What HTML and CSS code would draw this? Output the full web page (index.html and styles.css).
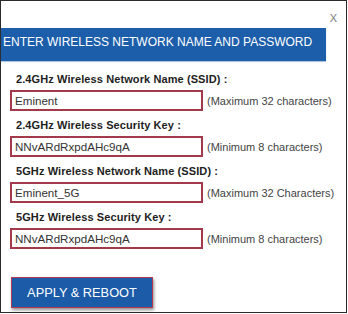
FILE: index.html
```html
<!DOCTYPE html>
<html>
<head>
<meta charset="utf-8">
<link rel="stylesheet" href="styles.css">
</head>
<body>
<div class="dialog">
  <div class="top-row"><span class="close">X</span></div>
  <div class="header">ENTER WIRELESS NETWORK NAME AND PASSWORD</div>
  <div class="form">
    <div class="group">
      <div class="label">2.4GHz Wireless Network Name (SSID) :</div>
      <div class="field-row">
        <input class="field" type="text" value="Eminent">
        <span class="hint">(Maximum 32 characters)</span>
      </div>
    </div>
    <div class="group">
      <div class="label">2.4GHz Wireless Security Key :</div>
      <div class="field-row">
        <input class="field" type="text" value="NNvARdRxpdAHc9qA">
        <span class="hint">(Minimum 8 characters)</span>
      </div>
    </div>
    <div class="group">
      <div class="label">5GHz Wireless Network Name (SSID) :</div>
      <div class="field-row">
        <input class="field" type="text" value="Eminent_5G">
        <span class="hint">(Maximum 32 Characters)</span>
      </div>
    </div>
    <div class="group">
      <div class="label">5GHz Wireless Security Key :</div>
      <div class="field-row">
        <input class="field" type="text" value="NNvARdRxpdAHc9qA">
        <span class="hint">(Minimum 8 characters)</span>
      </div>
    </div>
    <div class="actions">
      <button class="apply" type="button">APPLY &amp; REBOOT</button>
    </div>
  </div>
</div>
</body>
</html>
```
FILE: styles.css
```css
html, body {
  margin: 0;
  padding: 0;
  background: #ffffff;
}
body {
  font-family: "Liberation Sans", Arial, sans-serif;
}
.dialog {
  box-sizing: border-box;
  width: 347px;
  height: 313px;
  border: 1px solid #2b2b2b;
  background: #ffffff;
  display: flex;
  flex-direction: column;
}
.top-row {
  box-sizing: border-box;
  height: 27px;
  display: flex;
  justify-content: flex-end;
  padding: 11px 9px 0 0;
}
.close {
  font-size: 11px;
  line-height: 12px;
  color: #7a7a7a;
}
.header {
  box-sizing: border-box;
  width: 325px;
  height: 33px;
  padding: 7px 0 0 2px;
  background: #1c5eaa;
  color: #ffffff;
  font-size: 12px;
  line-height: 14px;
  white-space: nowrap;
  box-shadow: 0 1px 1px rgba(40, 90, 160, 0.35);
}
.form {
  display: flex;
  flex-direction: column;
  padding: 11px 0 0 9px;
}
.group {
  display: flex;
  flex-direction: column;
  padding-bottom: 7px;
}
.label {
  padding-left: 6px;
  font-size: 11px;
  line-height: 14px;
  font-weight: bold;
  color: #1e1e1e;
  letter-spacing: 0.1px;
  margin-bottom: 4px;
  white-space: nowrap;
}
.field-row {
  display: flex;
  align-items: center;
}
.field {
  box-sizing: border-box;
  width: 193px;
  height: 21px;
  margin: 0;
  padding: 0 0 0 3px;
  border: 2px solid #a23a4b;
  border-radius: 0;
  font-family: "Liberation Sans", Arial, sans-serif;
  font-size: 11.6px;
  color: #333333;
  background: #ffffff;
  outline: none;
}
.hint {
  margin-left: 4px;
  font-size: 11px;
  color: #444444;
  white-space: nowrap;
}
.actions {
  padding-top: 21px;
  padding-left: 1px;
}
.apply {
  box-sizing: border-box;
  width: 142px;
  height: 31px;
  margin: 0;
  padding: 0;
  border: 1px solid #b2394f;
  border-radius: 0;
  background: #1b5ba8;
  color: #ffffff;
  font-family: "Liberation Sans", Arial, sans-serif;
  font-size: 12.8px;
  line-height: 29px;
  box-shadow: 1px 2px 3px rgba(0, 0, 0, 0.45);
  cursor: pointer;
}
```
